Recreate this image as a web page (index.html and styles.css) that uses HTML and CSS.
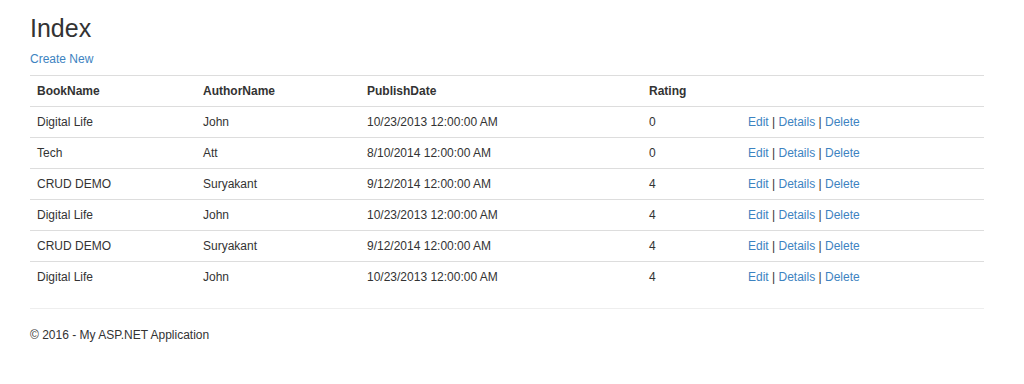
FILE: index.html
```html
<!DOCTYPE html>
<html>
<head>
<meta charset="utf-8">
<title>Index</title>
<link rel="stylesheet" href="styles.css">
</head>
<body>
<div class="container">
  <h2 class="title">Index</h2>
  <p class="actions"><a href="#">Create New</a></p>
  <table class="table">
    <colgroup>
      <col class="c-book"><col class="c-author"><col class="c-date"><col class="c-rating"><col class="c-links">
    </colgroup>
    <thead>
      <tr><th>BookName</th><th>AuthorName</th><th>PublishDate</th><th>Rating</th><th></th></tr>
    </thead>
    <tbody>
      <tr><td>Digital Life</td><td>John</td><td>10/23/2013 12:00:00 AM</td><td>0</td><td><a href="#">Edit</a> | <a href="#">Details</a> | <a href="#">Delete</a></td></tr>
      <tr><td>Tech</td><td>Att</td><td>8/10/2014 12:00:00 AM</td><td>0</td><td><a href="#">Edit</a> | <a href="#">Details</a> | <a href="#">Delete</a></td></tr>
      <tr><td>CRUD DEMO</td><td>Suryakant</td><td>9/12/2014 12:00:00 AM</td><td>4</td><td><a href="#">Edit</a> | <a href="#">Details</a> | <a href="#">Delete</a></td></tr>
      <tr><td>Digital Life</td><td>John</td><td>10/23/2013 12:00:00 AM</td><td>4</td><td><a href="#">Edit</a> | <a href="#">Details</a> | <a href="#">Delete</a></td></tr>
      <tr><td>CRUD DEMO</td><td>Suryakant</td><td>9/12/2014 12:00:00 AM</td><td>4</td><td><a href="#">Edit</a> | <a href="#">Details</a> | <a href="#">Delete</a></td></tr>
      <tr><td>Digital Life</td><td>John</td><td>10/23/2013 12:00:00 AM</td><td>4</td><td><a href="#">Edit</a> | <a href="#">Details</a> | <a href="#">Delete</a></td></tr>
    </tbody>
  </table>
  <hr class="rule">
  <footer class="footer">
    <p>&copy; 2016 - My ASP.NET Application</p>
  </footer>
</div>
</body>
</html>
```

FILE: styles.css
```css
html, body {
  margin: 0;
  padding: 0;
  background: #fff;
}
body {
  font-family: "Liberation Sans", Arial, Helvetica, sans-serif;
  font-size: 12px;
  line-height: 16px;
  color: #333;
}
.container {
  width: 954px;
  margin-left: 30px;
  padding-top: 14px;
}
a {
  color: #3d83c1;
  text-decoration: none;
}
.title {
  margin: 0 0 9px;
  font-size: 25px;
  line-height: 28px;
  font-weight: 500;
  color: #333;
}
.actions {
  margin: 0 0 8px;
}
.table {
  width: 954px;
  border-collapse: collapse;
  border-spacing: 0;
  table-layout: fixed;
  margin: 0;
}
.c-book { width: 166px; }
.c-author { width: 164px; }
.c-date { width: 282px; }
.c-rating { width: 99px; }
.c-links { width: 243px; }
.table th,
.table td {
  padding: 7px;
  text-align: left;
  vertical-align: top;
  border-top: 1px solid #ddd;
  white-space: nowrap;
}
.table th {
  font-weight: bold;
}
.rule {
  margin: 16px 0 0;
  border: 0;
  border-top: 1px solid #eee;
  height: 0;
}
.footer p {
  margin: 18px 0 0;
}
```
